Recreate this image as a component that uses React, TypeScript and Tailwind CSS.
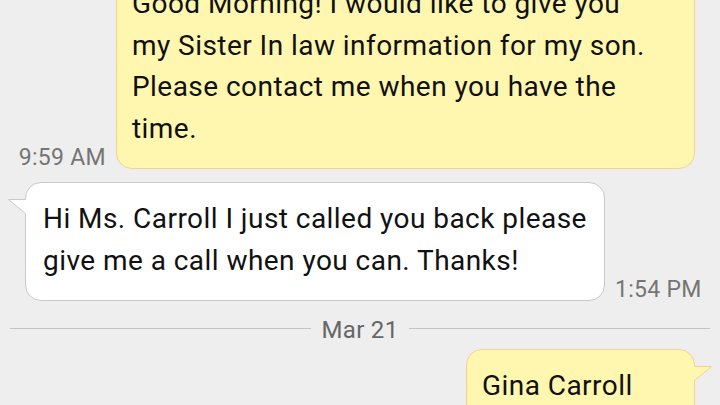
import React from "react";

const font = { fontFamily: "Roboto, 'Noto Sans', sans-serif" };

const Tail = ({ side, fill, stroke }: { side: "left" | "right"; fill: string; stroke: string }) => (
  <svg
    width="20"
    height="16"
    viewBox="0 0 20 16"
    className={
      side === "left"
        ? "absolute top-[16px] left-[-18px]"
        : "absolute top-[16px] right-[-18px] -scale-x-100"
    }
  >
    <polygon points="0,0.5 19.5,0.5 19.5,14.5 17,14.5" fill={fill} />
    <polyline points="17.5,0.5 0.5,0.5 17.5,14.5" fill="none" stroke={stroke} strokeWidth="1" />
  </svg>
);

const Outgoing = ({ text, time, w, className }: { text: string; time?: string; w: string; className?: string }) => (
  <div className={"flex items-end justify-end gap-[10px] px-[25px] " + (className ?? "")}>
    {time && (
      <span className="shrink-0 whitespace-nowrap text-[23px] leading-none tracking-[0.3px] text-[#757575]">{time}</span>
    )}
    <div
      className={
        "relative shrink-0 rounded-[16px] border border-[#f8d08e] bg-[#fff6b0] pl-[15px] pr-[42px] pt-[15px] pb-[19px] text-[28px] leading-[41.5px] tracking-[0.45px] text-[#111] " +
        w
      }
    >
      {text}
      <Tail side="right" fill="#fff6b0" stroke="#f8d08e" />
    </div>
  </div>
);

export default function App() {
  return (
    <div className="h-[405px] w-[720px] overflow-hidden bg-[#eeeeee]" style={font}>
      <Outgoing
        className="mt-[-33px]"
        w="w-[579px]"
        time="9:59 AM"
        text="Good Morning! I would like to give you my Sister In law information for my son. Please contact me when you have the time."
      />

      <div className="mt-[13px] flex items-end gap-[10px] px-[25px]">
        <div className="relative w-[580px] shrink-0 rounded-[16px] border border-[#c9c9c9] bg-white pl-[17px] pr-[12px] pt-[15px] pb-[19px] text-[28px] leading-[41.5px] tracking-[0.45px] text-[#111]">
          Hi Ms. Carroll I just called you back please give me a call when you can. Thanks!
          <Tail side="left" fill="#ffffff" stroke="#c9c9c9" />
        </div>
        <span className="shrink-0 whitespace-nowrap text-[23px] leading-none tracking-[0.3px] text-[#757575]">1:54 PM</span>
      </div>

      <div className="mt-[15px] flex items-center gap-[11px] px-[10px]">
        <div className="mb-1 h-px flex-1 bg-[#c4c4c4]" />
        <span className="text-[24px] leading-[28px] tracking-[0.3px] text-[#666666]">Mar 21</span>
        <div className="mb-1 h-px flex-1 bg-[#c4c4c4]" />
      </div>

      <Outgoing className="mt-[5px]" w="w-[229px]" text="Gina Carroll" />
    </div>
  );
}
